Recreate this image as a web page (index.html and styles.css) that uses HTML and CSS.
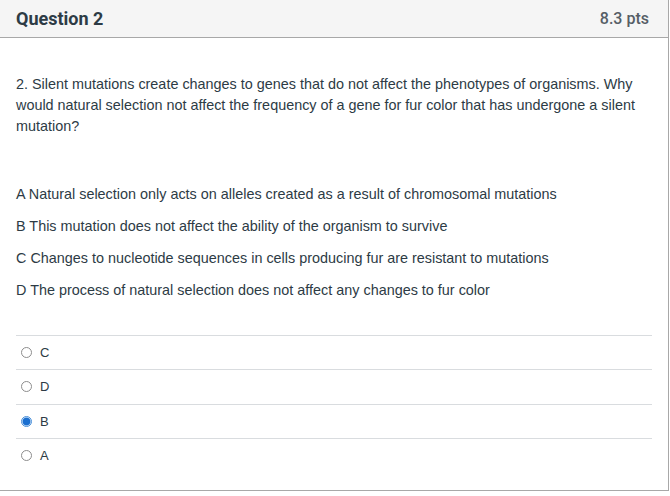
FILE: index.html
```html
<!DOCTYPE html>
<html>
<head>
<meta charset="utf-8">
<link rel="stylesheet" href="styles.css">
</head>
<body>
<div class="question">
  <div class="header">
    <span class="title">Question 2</span>
    <span class="pts">8.3 pts</span>
  </div>
  <div class="content">
    <p class="stem">2. Silent mutations create changes to genes that do not affect the phenotypes of organisms. Why would natural selection not affect the frequency of a gene for fur color that has undergone a silent mutation?</p>
    <p class="choice">A Natural selection only acts on alleles created as a result of chromosomal mutations</p>
    <p class="choice">B This mutation does not affect the ability of the organism to survive</p>
    <p class="choice">C Changes to nucleotide sequences in cells producing fur are resistant to mutations</p>
    <p class="choice">D The process of natural selection does not affect any changes to fur color</p>
    <div class="answers">
      <div class="answer"><span class="radio"></span><span class="label">C</span></div>
      <div class="answer"><span class="radio"></span><span class="label">D</span></div>
      <div class="answer"><span class="radio checked"></span><span class="label">B</span></div>
      <div class="answer"><span class="radio"></span><span class="label">A</span></div>
    </div>
  </div>
</div>
</body>
</html>
```
FILE: styles.css
```css
html, body {
  margin: 0;
  padding: 0;
  background: #fff;
}
.question {
  width: 668px;
  height: 490px;
  border-right: 1px solid #a8a8a8;
  border-bottom: 1px solid #a8a8a8;
  font-family: "Liberation Sans", Arial, sans-serif;
  color: #2d3b45;
}
.header {
  height: 38px;
  box-sizing: border-box;
  background: #f5f5f5;
  border-bottom: 1px solid #a8a8a8;
  display: flex;
  justify-content: space-between;
  align-items: center;
  padding: 0 19px 1px 16px;
  font-family: Roboto, "Liberation Sans", sans-serif;
}
.title {
  font-weight: 700;
  font-size: 18px;
  color: #2d3b45;
}
.pts {
  font-weight: 500;
  font-size: 16px;
  color: #565e66;
}
.content {
  padding: 36px 16px 0 16px;
  font-size: 14.4px;
  line-height: 21px;
}
.content p {
  margin: 0;
}
.stem {
  margin-bottom: 47px !important;
}
.choice {
  margin-bottom: 11px !important;
}
.answers {
  margin-top: 34px;
}
.answer {
  height: 34.3px;
  box-sizing: border-box;
  border-top: 1px solid #d9dcdf;
  display: flex;
  align-items: center;
  padding-left: 5px;
  font-size: 13px;
}
.radio {
  width: 9px;
  height: 9px;
  border: 1px solid #8d8d8d;
  border-radius: 50%;
  box-sizing: content-box;
  margin-right: 8px;
  background: #fff;
}
.radio.checked {
  border-color: #4a90d9;
  background: radial-gradient(circle, #1a6fd0 0 3.5px, #cfe2f7 4.3px);
}
.label {
  color: #2d3b45;
}
```
